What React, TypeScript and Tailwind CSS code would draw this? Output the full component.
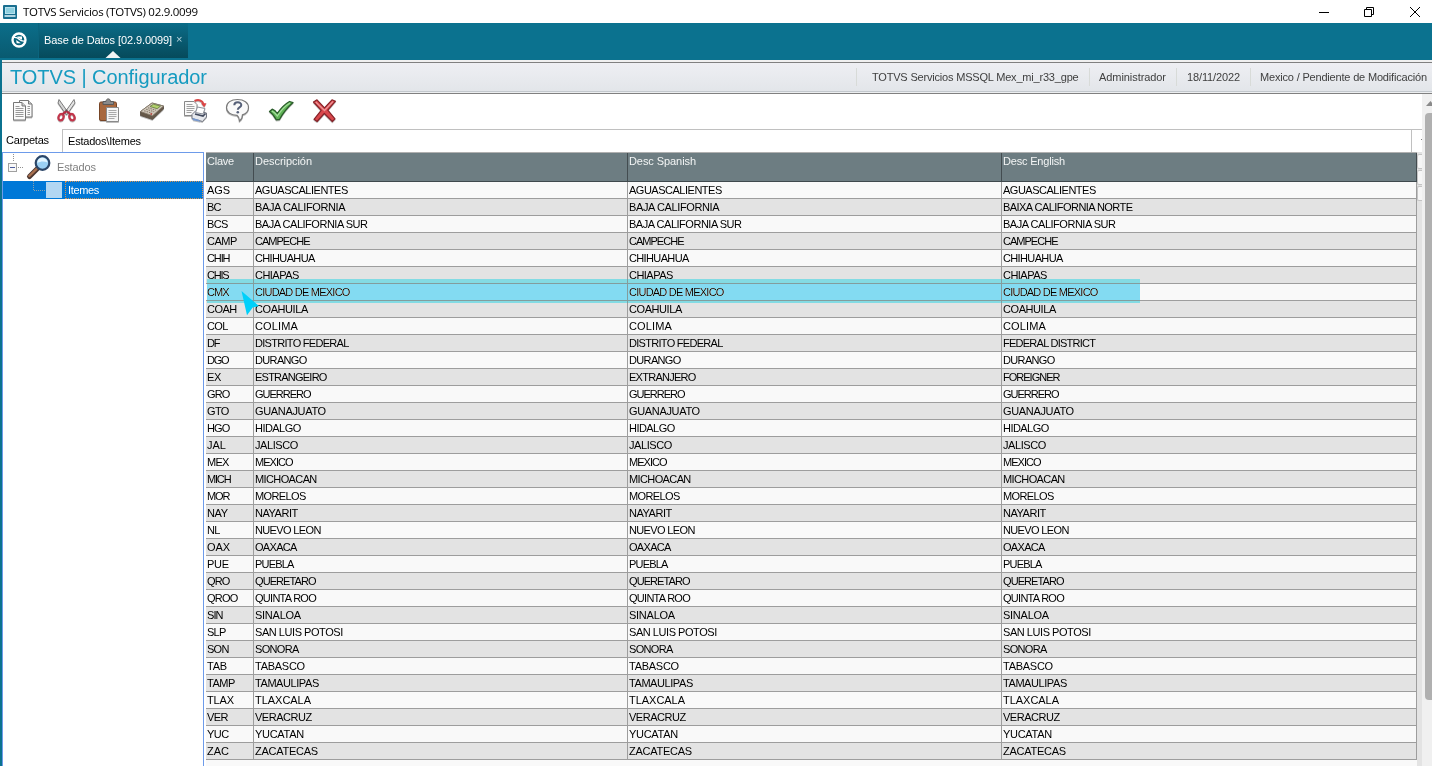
import React from 'react';

interface LabelProps {
  text: string;
  width: number;
  font?: string;
  className?: string;
}

interface Estado {
  clave: string;
  desc: string;
  spanish?: string;
  english?: string;
}

const ctx = document.createElement('canvas').getContext('2d');

const SMALL = '11px "Liberation Sans"';

// Pixel widths of the bitmap-hinted strings
const widths: Record<string, number> = {
  AGS: 23, BC: 14, BCS: 21, CAMP: 30, CHIH: 23, CHIS: 22, CMX: 22, COAH: 30, COL: 21, DF: 13, DGO: 22,
  EX: 14, GRO: 23, GTO: 22, HGO: 23, JAL: 19, MEX: 22, MICH: 24, MOR: 23, NAY: 21, NL: 13, OAX: 23,
  PUE: 22, QRO: 23, QROO: 31, SIN: 16, SLP: 19, SON: 22, TAB: 20, TAMP: 28, TLAX: 27, VER: 21, YUC: 22, ZAC: 22,
  AGUASCALIENTES: 93, 'BAJA CALIFORNIA': 91, 'BAIXA CALIFORNIA NORTE': 131, 'BAJA CALIFORNIA SUR': 114,
  CAMPECHE: 55, CHIHUAHUA: 60, CHIAPAS: 44, 'CIUDAD DE MEXICO': 95, COAHUILA: 53, COLIMA: 43,
  'DISTRITO FEDERAL': 94, 'FEDERAL DISTRICT': 93, DURANGO: 52, ESTRANGEIRO: 72, EXTRANJERO: 67, FOREIGNER: 57,
  GUERRERO: 56, GUANAJUATO: 71, HIDALGO: 46, JALISCO: 43, MEXICO: 38, MICHOACAN: 62, MORELOS: 51, NAYARIT: 43,
  'NUEVO LEON': 66, OAXACA: 42, PUEBLA: 39, QUERETARO: 61, 'QUINTA ROO': 62, SINALOA: 46, 'SAN LUIS POTOSI': 88,
  SONORA: 44, TABASCO: 50, TAMAULIPAS: 64, TLAXCALA: 56, VERACRUZ: 57, YUCATAN: 49, ZACATECAS: 63,
};

const estados: Estado[] = [
  { clave: 'AGS', desc: 'AGUASCALIENTES' },
  { clave: 'BC', desc: 'BAJA CALIFORNIA', english: 'BAIXA CALIFORNIA NORTE' },
  { clave: 'BCS', desc: 'BAJA CALIFORNIA SUR' },
  { clave: 'CAMP', desc: 'CAMPECHE' },
  { clave: 'CHIH', desc: 'CHIHUAHUA' },
  { clave: 'CHIS', desc: 'CHIAPAS' },
  { clave: 'CMX', desc: 'CIUDAD DE MEXICO' },
  { clave: 'COAH', desc: 'COAHUILA' },
  { clave: 'COL', desc: 'COLIMA' },
  { clave: 'DF', desc: 'DISTRITO FEDERAL', english: 'FEDERAL DISTRICT' },
  { clave: 'DGO', desc: 'DURANGO' },
  { clave: 'EX', desc: 'ESTRANGEIRO', spanish: 'EXTRANJERO', english: 'FOREIGNER' },
  { clave: 'GRO', desc: 'GUERRERO' },
  { clave: 'GTO', desc: 'GUANAJUATO' },
  { clave: 'HGO', desc: 'HIDALGO' },
  { clave: 'JAL', desc: 'JALISCO' },
  { clave: 'MEX', desc: 'MEXICO' },
  { clave: 'MICH', desc: 'MICHOACAN' },
  { clave: 'MOR', desc: 'MORELOS' },
  { clave: 'NAY', desc: 'NAYARIT' },
  { clave: 'NL', desc: 'NUEVO LEON' },
  { clave: 'OAX', desc: 'OAXACA' },
  { clave: 'PUE', desc: 'PUEBLA' },
  { clave: 'QRO', desc: 'QUERETARO' },
  { clave: 'QROO', desc: 'QUINTA ROO' },
  { clave: 'SIN', desc: 'SINALOA' },
  { clave: 'SLP', desc: 'SAN LUIS POTOSI' },
  { clave: 'SON', desc: 'SONORA' },
  { clave: 'TAB', desc: 'TABASCO' },
  { clave: 'TAMP', desc: 'TAMAULIPAS' },
  { clave: 'TLAX', desc: 'TLAXCALA' },
  { clave: 'VER', desc: 'VERACRUZ' },
  { clave: 'YUC', desc: 'YUCATAN' },
  { clave: 'ZAC', desc: 'ZACATECAS' },
];

const GRID = 'grid grid-cols-[48px_374px_374px_415px]';

// Text whose letter spacing is adjusted so that it takes the given width
function Label({ text, width, font = SMALL, className = '' }: LabelProps) {
  let spacing = 0;
  if (ctx) {
    ctx.font = font;
    spacing = (width - ctx.measureText(text).width) / (text.length - 0.5);
  }
  return (
    <span className={`whitespace-nowrap ${className}`} style={{ letterSpacing: `${spacing}px` }}>
      {text}
    </span>
  );
}

function TitleBar() {
  return (
    <div className="flex h-[23px] items-center bg-white">
      <svg className="ml-[3px] h-[14px] w-[14px]" viewBox="0 0 14 14">
        <rect width="14" height="14" rx="1" fill="#1a6f90" />
        <rect x="2.500" y="2.500" width="9" height="6" fill="#8fd0e0" stroke="#b9e2ee" />
        <path d="M1.500 11h11" stroke="#d9eff6" strokeWidth="1.600" />
      </svg>
      <Label
        text="TOTVS Servicios (TOTVS) 02.9.0099"
        width={175}
        font={'11.5px "Open Sans"'}
        className="ml-[6px] font-['Open_Sans',sans-serif] text-[11.5px] leading-[22px] text-black"
      />
      <div className="ml-auto flex items-center">
        <svg className="h-[14px] w-[106px]" viewBox="1317 4 106 14" fill="none" stroke="#000">
          <path d="M1319 11.500h10" />
          <path d="M1364.500 8.500h7v7h-7zM1366.500 8.500v-2h7v7h-2" />
          <path d="M1410 6l10 10M1420 6l-10 10" />
        </svg>
        <div className="w-[9px]" />
      </div>
    </div>
  );
}

function TabBar() {
  return (
    <div className="flex h-[37px] bg-[#0b728f] pb-[2px]">
      <div className="flex w-[39px] items-center border-r border-[#0b647d] bg-linear-to-b from-[#0b6e8a] to-[#095a70] pl-[11px]">
        <svg className="mt-[-1px] h-[16px] w-[16px]" viewBox="0 0 17 17">
          <circle cx="8.500" cy="8.500" r="6.900" fill="none" stroke="#fff" strokeWidth="2.500" />
          <path d="M2 6c4-1 6 1 7 2s3.500 2 6 1.500" fill="none" stroke="#fff" strokeWidth="1.500" />
          <path d="M6.500 4.800h5.200v3.500L7.500 6z" fill="#fff" />
          <path d="M5.500 8.500l5 3.500H6z" fill="#fff" />
        </svg>
      </div>
      <div className="relative flex w-[149px] items-center bg-linear-to-b from-[#0b6c88] to-[#064a5b] pl-[5px] text-white">
        <Label text="Base de Datos [02.9.0099]" width={128} />
        <span className="ml-[4px] mt-[-2px] text-[11px] text-[#b5d3dc]">×</span>
        <svg className="absolute bottom-0 left-[66px] h-[7px] w-[16px]" viewBox="0 0 16 7">
          <path d="M.5 7L8 0l7.500 7z" fill="#f3f4f5" />
        </svg>
      </div>
    </div>
  );
}

function Separator() {
  return <div className="h-[18px] w-px bg-[#d8dbd8]" />;
}

function AppHeader() {
  return (
    <div className="flex h-[34px] flex-col bg-[#f0f0f0] pt-[2px]">
      <div className="flex h-[32px] items-center border-y border-[#808080] bg-linear-to-b from-[#eeeff3] to-[#e2e5e9] pb-[2px] shadow-[inset_0_-1px_0_#eceef0,inset_0_-2px_0_#c3c8cd]">
        <Label
          text="TOTVS | Configurador"
          width={197}
          font={'20px "Liberation Sans"'}
          className="ml-[8px] text-[20px] leading-[28px] text-[#169bc0]"
        />
        <div className="ml-auto flex items-center text-[#404040]">
          <Separator />
          <Label text="TOTVS Servicios MSSQL Mex_mi_r33_gpe" width={207} className="ml-[15px] w-[217px]" />
          <Separator />
          <Label text="Administrador" width={67} className="ml-[9px] w-[77px]" />
          <Separator />
          <Label text="18/11/2022" width={53} className="ml-[10px] w-[63px]" />
          <Separator />
          <Label text="Mexico / Pendiente de Modificación" width={167} className="ml-[9px] w-[172px]" />
        </div>
      </div>
    </div>
  );
}

function Icon({ children }: { children: React.ReactNode }) {
  return (
    <svg className="h-[28px] w-[28px] drop-shadow-[0_1px_0.500px_rgba(0,0,0,0.25)]" viewBox="0 0 28 28" fill="none">
      {children}
    </svg>
  );
}

function Toolbar() {
  return (
    <div className="flex h-[35px] items-start gap-[15px] bg-white pl-[7px] pt-[3px]">
      {/* Copiar */}
      <Icon>
        <path d="M10.500 3.500h9l3.500 3.500v13h-12.500z" fill="#fafafa" stroke="#777" />
        <path d="M19.500 3.500v3.500h3.500" fill="#ccc" stroke="#777" />
        <path d="M4.500 5.500h8.500l3.500 3.500v14h-12z" fill="#fafafa" stroke="#777" />
        <path d="M13 5.500v3.500h3.500" fill="#ccc" stroke="#777" />
        <path d="M6.500 9.500h4M6.500 11.500h8M6.500 13.500h8M6.500 15.500h8M6.500 17.500h8M6.500 19.500h8M18.500 9.500h2.500M18.500 11.500h2.500M18.500 13.500h2.500M18.500 15.500h2.500M18.500 17.500h2.500" stroke="#999" />
      </Icon>
      {/* Cortar */}
      <Icon>
        <path d="M7 2.500l9.500 13.500-2.500 1.500L6 6z" fill="#d5d5d5" stroke="#707070" strokeWidth=".9" />
        <path d="M22 2.500l-9.500 13.500 2.500 1.500L23 6z" fill="#e4e4e4" stroke="#707070" strokeWidth=".9" />
        <ellipse cx="9" cy="20.200" rx="2.500" ry="3.200" transform="rotate(24 9 20.200)" stroke="#c2364b" strokeWidth="2.200" />
        <ellipse cx="20" cy="20.200" rx="2.500" ry="3.200" transform="rotate(-24 20 20.200)" stroke="#c2364b" strokeWidth="2.200" />
        <path d="M10.500 17.200l4-3 4 3" stroke="#b52b40" strokeWidth="2.200" />
        <circle cx="14.500" cy="13.500" r="1" fill="#555" />
      </Icon>
      {/* Pegar */}
      <Icon>
        <rect x="4.500" y="5" width="17" height="18.500" rx="1.500" fill="#a8683e" stroke="#774526" />
        <path d="M8 7.500v-3h3c0-3.500 4.500-3.500 4.500 0h3v3z" fill="#8a8a8a" stroke="#5b5b5b" />
        <path d="M11.500 10.500h12v14h-12z" fill="#f6f6f6" stroke="#8a8a8a" />
        <path d="M13.500 13.500h8M13.500 15.500h8M13.500 17.500h8M13.500 19.500h8M13.500 21.500h6" stroke="#aaa" />
      </Icon>
      {/* Calculadora */}
      <Icon>
        <path d="M2.500 14.500L14 6l11.500 3v3L14.500 22.500l-12-4z" fill="#655849" stroke="#574c41" strokeWidth=".8" strokeLinejoin="round" />
        <path d="M2.500 14.500L14 6l11.500 3L14.500 18.700z" fill="#d0c7ba" stroke="#847969" strokeWidth=".8" strokeLinejoin="round" />
        <path d="M12 9.500l3.500-2.300 7 1.900-3.300 2.600z" fill="#b2d16c" stroke="#64783f" strokeWidth=".8" />
        <path d="M6.200 13.800l8 2.600M8.200 12.200l8 2.600M10 10.800l8 2.500" stroke="#877b6c" strokeWidth="1.100" strokeDasharray="1.500 1" />
        <path d="M12.500 16.800l1.500.5" stroke="#b9403a" strokeWidth="1.600" />
      </Icon>
      {/* Imprimir */}
      <Icon>
        <path d="M3.500 4.500h9.500l3 3v11h-12.500z" fill="#fafafa" stroke="#888" />
        <path d="M5.500 7.500h6M5.500 9.500h8M5.500 11.500h8M5.500 13.500h7M5.500 15.500h5" stroke="#a0a0a0" />
        <path d="M13.500 4c4-2 8-.5 9 3" stroke="#d84848" strokeWidth="2" />
        <path d="M20 6.200h5.500l-2.300 4z" fill="#d44" />
        <path d="M11 17.500l4-4 10.500 2.500v4l-4 4.500-10.500-3z" fill="#e6e8ec" stroke="#707580" />
        <path d="M14.500 15.500l2-5.500 7.500 1.500-2 5.500z" fill="#fff" stroke="#8a8f99" />
        <path d="M14 17l8 2 2.500-2.500" stroke="#414a5e" strokeWidth="1.700" />
        <path d="M11.500 21l6.500 1.700 1.500 2-7.500-1.500z" fill="#7799d0" />
      </Icon>
      {/* Ayuda */}
      <Icon>
        <path d="M13.500 2.500c6.500 0 11 3.200 11 8 0 3.700-2.500 6.300-6 7.300 0 2.500-.8 4.700-3 6.200 0-2.200-.7-4.200-2.500-5.700C7 18.300 2.500 15.500 2.500 10.500s4.500-8 11-8z" fill="#fafafa" stroke="#7a7a7a" strokeWidth="1.200" />
        <path d="M10.300 8.200c0-3.800 7-3.800 7-.2 0 2.500-3.500 2.300-3.500 4.700" stroke="#566078" strokeWidth="2" />
        <circle cx="13.800" cy="15.300" r="1.300" fill="#566078" />
      </Icon>
      {/* Confirmar */}
      <Icon>
        <path d="M2.500 14.500l2.700-2.300c2.300.8 3.800 2.200 5 4.300C14 11 18 7 22.500 4.500l3.500 1C20.500 10.500 16 16 12.500 22.500l-3.300.3C7.500 19.500 5.500 16.500 2.500 14.500z" fill="#5fb356" stroke="#2a5c2a" strokeWidth="1.300" strokeLinejoin="round" />
        <path d="M5 14c2 1 3.800 2.700 5.300 5C14 13.500 18 9 23 6" stroke="#a3dd9a" strokeWidth="1.300" />
      </Icon>
      {/* Cancelar */}
      <Icon>
        <path d="M3.500 5l3.500-2.200 7.500 8 7.500-8 3.500 1.400-7.700 9 7.200 8.600-2.700 2.700-8-8-7.200 8-3.100-2.200 7.200-9z" fill="#d9474c" stroke="#852329" strokeWidth="1.200" strokeLinejoin="round" />
        <path d="M5.800 5l8.700 8.500 8.500-9" stroke="#ef9396" strokeWidth="1.300" />
      </Icon>
    </div>
  );
}

function PathBar() {
  return (
    <div className="flex h-[23px] bg-white">
      <div className="flex w-[60px] items-center pl-[4px]">
        <Label text="Carpetas" width={43} className="mt-[-1px]" />
      </div>
      <div className="flex flex-1 items-center border-l border-t border-[#c0c0c0] pl-[5px]">
        <Label text="Estados\Itemes" width={73} />
      </div>
      <div className="flex w-[11px] items-center justify-end border-l border-t border-[#c0c0c0]">
        <div className="mb-[4px] h-px w-px bg-[#808080]" />
      </div>
    </div>
  );
}

function Tree() {
  return (
    <div className="flex w-[202px] flex-col border border-b-0 border-[#6d9bea] bg-white">
      <div className="flex h-[28px] items-center">
        <svg className="h-[28px] w-[48px]" viewBox="3 153 48 28" fill="none">
          <path d="M13.500 154v8M18 167.500h5" stroke="#909090" strokeDasharray="1 1" />
          <rect x="8.500" y="163.500" width="8" height="8" fill="#f8f8f8" stroke="#a0a0a0" />
          <path d="M10 167.500h5" stroke="#4b5b9b" />
          <path d="M29.500 176.500l7.500-7.500" stroke="#4d3730" strokeWidth="5" strokeLinecap="round" />
          <path d="M29.300 176l7.300-7.200" stroke="#a9704f" strokeWidth="2.400" strokeLinecap="round" />
          <circle cx="42.500" cy="163" r="6.800" fill="#9bd0f4" stroke="#2c4668" strokeWidth="2.200" />
          <path d="M37.500 163c-.5-7 9.500-7 10-.5-3-1.500-7-1.500-10 .5z" fill="#e5f6ff" />
        </svg>
        <Label text="Estados" width={39} className="ml-[6px] text-[#808080]" />
      </div>
      <div className="flex h-[18px] items-center bg-[#0078d7] text-white">
        <svg className="h-[18px] w-[43px]" viewBox="0 0 43 18" fill="none">
          <path d="M30.500 0v9.500H42" stroke="#8fa0a6" strokeDasharray="1 1" />
        </svg>
        <div className="h-[16px] w-[16px] bg-[#b2d7f3]" />
        <div className="ml-[3px] flex h-[18px] flex-1 items-center border border-dotted border-[#d8924f] pl-[2px]">
          <Label text="Itemes" width={31} />
        </div>
      </div>
    </div>
  );
}

function HeaderCell({ text, width }: { text: string; width: number }) {
  return (
    <div className="border-r border-[#434c50] pl-px pt-[2px] leading-[13px] text-[#f3f5f5]">
      <Label text={text} width={width} />
    </div>
  );
}

function Row({ estado }: { estado: Estado }) {
  const values = [estado.clave, estado.desc, estado.spanish ?? estado.desc, estado.english ?? estado.desc];
  return (
    <div className={`${GRID} h-[17px] border-b border-[#9d9d9d] bg-[#f9f9f9] even:bg-[#e3e3e3]`}>
      {values.map((value, index) => (
        <div key={index} className="border-r border-[#9d9d9d] pl-px leading-[16px]">
          <Label text={value} width={widths[value]} />
        </div>
      ))}
    </div>
  );
}

function Table() {
  return (
    <div className="relative ml-[2px] w-[1211px] bg-[#f9f9f9]">
      <div className={`${GRID} h-[30px] border-b border-t border-b-[#3f494d] border-t-[#b0b0b0] bg-[#6d7d82]`}>
        <HeaderCell text="Clave" width={27} />
        <HeaderCell text="Descripción" width={57} />
        <HeaderCell text="Desc Spanish" width={67} />
        <HeaderCell text="Desc English" width={62} />
      </div>
      <div>
        {estados.map((estado) => (
          <Row key={estado.clave} estado={estado} />
        ))}
      </div>

      {/* Highlighter and pointer drawn over the CMX row */}
      <div className="absolute left-px top-[127px] h-[24px] w-[933px] bg-[#83dbf2] mix-blend-darken" />
      <svg className="absolute left-[34px] top-[136px] h-[30px] w-[22px]" viewBox="240 288 22 30">
        <path d="M241.500 291l17.500 15-6.300 1.500-5.700 7.700z" fill="#00d0fa" />
      </svg>
    </div>
  );
}

function ScrollBar() {
  return (
    <div className="flex w-[10px] flex-col bg-[#f0f0f0]">
      <svg className="mt-[6px] h-[6px] w-[10px]" viewBox="0 0 10 6">
        <path d="M4 6l4.500-5L13 6z" fill="#8a8a8a" />
      </svg>
      <div className="ml-[3px] mt-[7px] h-[587px] rounded-l-[4px] bg-[#b0b0b0]" />
    </div>
  );
}

export default function App() {
  return (
    <div className="flex h-[766px] w-[1432px] flex-col overflow-hidden bg-white font-['Liberation_Sans',Arial,sans-serif] text-[11px] text-black">
      <TitleBar />
      <TabBar />
      <div className="flex min-h-0 flex-1 border-l-2 border-[#0b728f]">
        <div className="flex min-w-0 flex-1 flex-col">
          <AppHeader />
          <div className="flex min-h-0 flex-1">
            <div className="flex w-[1420px] flex-col">
              <Toolbar />
              <PathBar />
              <div className="flex min-h-0 flex-1">
                <Tree />
                <Table />
                <div className="flex flex-1 flex-col bg-[#e3e3e3] pt-[2px]">
                  <div className="h-[15px] rounded-l-[2px] border border-r-0 border-[#c4c4c4] bg-[#f6f6f6]" />
                  <div className="mt-px h-[15px] rounded-l-[2px] border border-r-0 border-[#c4c4c4] bg-[#f6f6f6]" />
                  <div className="mt-px h-[15px] rounded-l-[2px] border border-r-0 border-[#c4c4c4] bg-[#f6f6f6]" />
                </div>
              </div>
            </div>
            <ScrollBar />
          </div>
        </div>
      </div>
    </div>
  );
}
